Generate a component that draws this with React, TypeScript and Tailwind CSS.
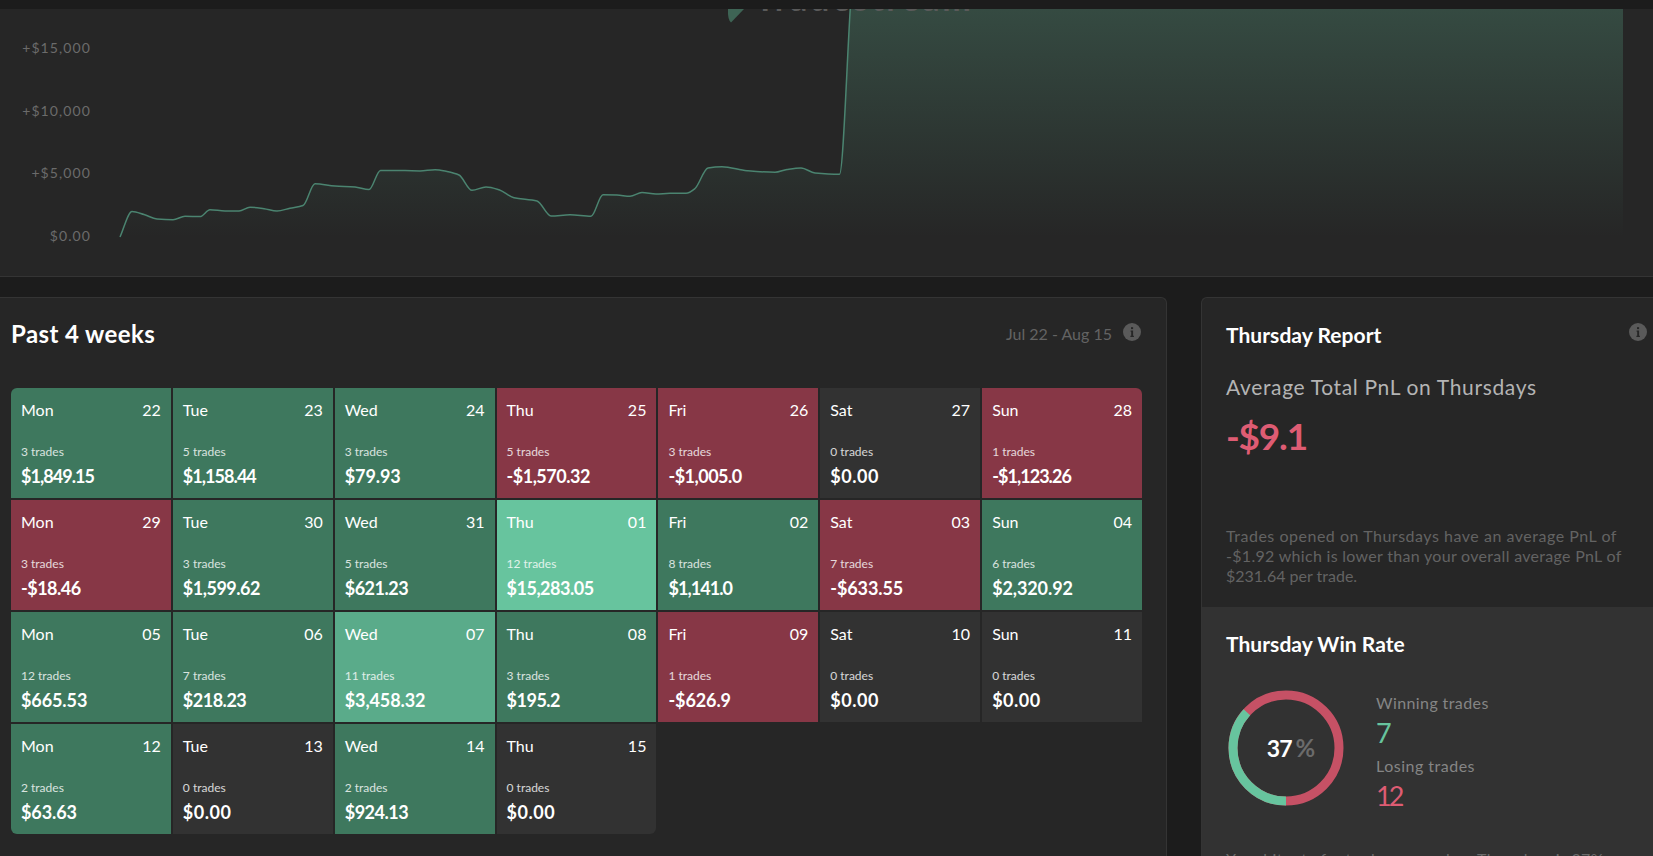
import React from 'react';

type Tone = 'win' | 'loss' | 'flat' | 'good' | 'best';

interface Day {
  name: string;
  date: string;
  trades: number;
  pnl: string;
  tone: Tone;
}

const TONES: Record<Tone, string> = {
  win: 'bg-[#3e785e]',
  loss: 'bg-[#873746]',
  flat: 'bg-[#323232]',
  good: 'bg-[#5aab8a]',
  best: 'bg-[#67c49e]',
};

const NAMES = ['Mon', 'Tue', 'Wed', 'Thu', 'Fri', 'Sat', 'Sun'];

const ROWS: [string, number, string, Tone][] = [
  ['22', 3, '$1,849.15', 'win'],
  ['23', 5, '$1,158.44', 'win'],
  ['24', 3, '$79.93', 'win'],
  ['25', 5, '-$1,570.32', 'loss'],
  ['26', 3, '-$1,005.0', 'loss'],
  ['27', 0, '$0.00', 'flat'],
  ['28', 1, '-$1,123.26', 'loss'],
  ['29', 3, '-$18.46', 'loss'],
  ['30', 3, '$1,599.62', 'win'],
  ['31', 5, '$621.23', 'win'],
  ['01', 12, '$15,283.05', 'best'],
  ['02', 8, '$1,141.0', 'win'],
  ['03', 7, '-$633.55', 'loss'],
  ['04', 6, '$2,320.92', 'win'],
  ['05', 12, '$665.53', 'win'],
  ['06', 7, '$218.23', 'win'],
  ['07', 11, '$3,458.32', 'good'],
  ['08', 3, '$195.2', 'win'],
  ['09', 1, '-$626.9', 'loss'],
  ['10', 0, '$0.00', 'flat'],
  ['11', 0, '$0.00', 'flat'],
  ['12', 2, '$63.63', 'win'],
  ['13', 0, '$0.00', 'flat'],
  ['14', 2, '$924.13', 'win'],
  ['15', 0, '$0.00', 'flat'],
];

const DAYS: Day[] = ROWS.map(([date, trades, pnl, tone], i) => ({ name: NAMES[i % 7], date, trades, pnl, tone }));

const POINTS: [number, number][] = [
  [120, 237], [132, 211.5], [144, 214.5], [157, 219], [173, 219.7], [185, 216.3], [200, 216.6], [210, 209.7],
  [225, 211], [239, 211], [250, 207.2], [264, 208.7], [277, 211], [290, 208.2], [303, 205.5], [315, 183.7],
  [335, 186], [355, 187], [369, 189.6], [380.5, 170.5], [405, 170.6], [420, 170.9], [435, 169.7], [447, 171.5],
  [459, 175], [472, 190.3], [486, 187], [499, 189.7], [514, 197.7], [537, 201], [551, 216], [570, 214.8],
  [591, 216.3], [603, 194.8], [617, 195], [630, 196.3], [642, 192.5], [656, 194], [670, 193.3], [686, 193.3],
  [695, 188.5], [708, 168], [722, 166.7], [747, 170.7], [775, 172.3], [787, 169.5], [801, 168], [815, 173],
  [839.5, 174.3], [850.5, 5],
];

// Monotone cubic interpolation, so the curve never overshoots a point.
function linePath(pts: [number, number][]) {
  const n = pts.length;
  const slope = pts.slice(1).map((p, i) => (p[1] - pts[i][1]) / (p[0] - pts[i][0]));
  const m = pts.map((_, i) => {
    if (i === 0) return slope[0];
    if (i === n - 1) return slope[n - 2];
    const a = slope[i - 1];
    const b = slope[i];
    return a * b <= 0 ? 0 : (2 * a * b) / (a + b);
  });
  let d = `M${pts[0][0]},${pts[0][1]}`;
  for (let i = 1; i < n; i++) {
    const [x0, y0] = pts[i - 1];
    const [x1, y1] = pts[i];
    const h = (x1 - x0) / 3;
    d += `C${x0 + h},${y0 + m[i - 1] * h} ${x1 - h},${y1 - m[i] * h} ${x1},${y1}`;
  }
  return d;
}

const InfoIcon: React.FC = () => (
  <svg width="18" height="18" viewBox="0 0 18 18" className="shrink-0">
    <circle cx="9" cy="9" r="9" fill="#5a5a5a" />
    <rect x="8" y="4.2" width="2.1" height="1.9" fill="#262626" />
    <path d="M7.6 7.6h2.500v5.100h0.800v1.200h-3.500v-1.200h0.800v-3.900h-0.600z" fill="#262626" />
  </svg>
);

const PnlChart: React.FC = () => {
  const line = linePath(POINTS);
  return (
    <section className="relative h-[268px] overflow-hidden border-b border-[#343434] bg-[#262626]">
      <svg width="1653" height="267" viewBox="0 9 1653 267" className="absolute left-0 top-0">
        <defs>
          <linearGradient id="pnl" gradientUnits="userSpaceOnUse" x1="0" y1="9" x2="0" y2="237">
            <stop offset="0" stopColor="#67c49e" stopOpacity="0.23" />
            <stop offset="1" stopColor="#67c49e" stopOpacity="0" />
          </linearGradient>
        </defs>
        <path d="M728 9h16L731 22.5Q727.5 19.5 728 9Z" fill="#3e6455" />
        <path d={`${line}H1623V237H120Z`} fill="url(#pnl)" />
        <path d={line} fill="none" stroke="#4b8470" strokeWidth="1.5" />
      </svg>
      <div className="absolute left-[755px] top-[-27px] text-[34px] leading-[31px] tracking-[2.8px] font-bold text-[#5a5a5a]">
        Tradestream
      </div>
      <div className="flex w-[91px] flex-col gap-[42.7px] pt-[29px] text-right text-[14px] leading-5 tracking-[1.1px] text-[#6b6b6b]">
        <span>+$15,000</span>
        <span>+$10,000</span>
        <span>+$5,000</span>
        <span>$0.00</span>
      </div>
    </section>
  );
};

const amountTracking = (pnl: string) => {
  const ones = pnl.split('1').length - 1;
  if (pnl === '$0.00') return 'tracking-[0.5px]';
  if (ones === 0) return 'tracking-[-0.1px]';
  return ones === 1 ? 'tracking-[-0.5px]' : 'tracking-[-0.95px]';
};

const DayCell: React.FC<{ day: Day; corner: string }> = ({ day, corner }) => (
  <div className={`h-[110px] px-[10px] pt-3 text-white ${TONES[day.tone]} ${corner}`}>
    <div className="flex justify-between text-base leading-5">
      <span>{day.name}</span>
      <span>{day.date}</span>
    </div>
    <div className="mt-6 text-xs leading-4 opacity-80">{day.trades} trades</div>
    <div className={`mt-1 text-lg leading-6 font-bold ${amountTracking(day.pnl)}`}>{day.pnl}</div>
  </div>
);

const CORNERS: Record<number, string> = {
  0: 'rounded-tl-md',
  6: 'rounded-tr-md',
  21: 'rounded-bl-md',
  24: 'rounded-br-md',
};

const Calendar: React.FC = () => (
  <section className="w-[1167px] shrink-0 rounded-tr-md border-t border-r border-[#343434] bg-[#262626] pl-[11px] pr-6">
    <header className="flex h-[90px] justify-between pt-5">
      <h2 className="pt-px text-2xl leading-[30px] tracking-[0.4px] font-bold text-white">Past 4 weeks</h2>
      <div className="mr-px flex gap-[11px] pt-[5px]">
        <span className="-mt-px text-base leading-6 text-[#636363]">Jul 22 - Aug 15</span>
        <InfoIcon />
      </div>
    </header>
    <div className="grid grid-cols-7 gap-0.5">
      {DAYS.map((day, i) => (
        <DayCell key={i} day={day} corner={CORNERS[i] ?? ''} />
      ))}
    </div>
  </section>
);

const Donut: React.FC = () => (
  <div className="relative flex h-[116px] w-[116px] items-center justify-center">
    <svg width="116" height="116" viewBox="0 0 116 116" className="absolute inset-0">
      <circle cx="58" cy="58" r="53" fill="none" stroke="#c65165" strokeWidth="9" />
      <circle
        cx="58"
        cy="58"
        r="53"
        fill="none"
        stroke="#67c49e"
        strokeWidth="9"
        pathLength="100"
        strokeDasharray="36.8 100"
        transform="rotate(90 58 58)"
      />
    </svg>
    <span className="relative ml-[9px] text-[23px] leading-7 font-bold tracking-[-1px] text-white">
      37<span className="ml-1 text-2xl leading-7 text-[#6b6b6b]">%</span>
    </span>
  </div>
);

const Report: React.FC = () => (
  <section className="w-[480px] shrink-0 rounded-tl-md border-t border-l border-[#343434] bg-[#262626]">
    <div className="h-[309px] pl-6 pt-[23px]">
      <div className="flex justify-between">
        <h3 className="text-[21px] leading-7 tracking-[0.05px] font-bold text-white">Thursday Report</h3>
        <div className="mr-[34px] pt-0.5">
          <InfoIcon />
        </div>
      </div>
      <p className="mt-6 text-[21px] leading-7 tracking-[0.65px] text-[#b4b4b4]">Average Total PnL on Thursdays</p>
      <p className="mt-[13px] text-[37px] leading-[44px] tracking-[-1.2px] font-bold text-[#de5c73]">-$9.1</p>
      <p className="mt-[68px] text-base leading-5 text-[#636363]">
        <span className="tracking-[0.52px]">Trades opened on Thursdays have an average PnL of</span>
        <br />
        <span className="tracking-[0.3px]">-$1.92 which is lower than your overall average PnL of</span>
        <br />
        $231.64 per trade.
      </p>
    </div>
    <div className="h-[249px] bg-[#323232] pl-6 pt-[23px]">
      <h3 className="text-[21px] leading-7 tracking-[0.05px] font-bold text-white">Thursday Win Rate</h3>
      <div className="mt-8 flex h-[116px] gap-8 pl-[2px]">
        <Donut />
        <div>
          <p className="pt-[3px] text-base leading-5 tracking-[0.4px] text-[#858585]">Winning trades</p>
          <p className="mt-[5px] text-[27px] leading-[30px] text-[#67c49e]">7</p>
          <p className="mt-2 text-base leading-5 tracking-[0.5px] text-[#858585]">Losing trades</p>
          <p className="mt-[5px] text-[27px] leading-[30px] tracking-[-3px] text-[#de5c73]">12</p>
        </div>
      </div>
      <p className="mt-[43px] text-base leading-5 tracking-[0.3px] whitespace-nowrap text-[#6b6b6b]">
        Your hit rate for trades opened on Thursdays is 37%
      </p>
    </div>
  </section>
);

export default function App() {
  return (
    <div className="h-[856px] w-[1653px] overflow-hidden bg-[#1c1c1c] pt-[9px] font-['Lato',sans-serif]">
      <PnlChart />
      <div className="mt-5 flex h-[600px] gap-[34px]">
        <Calendar />
        <Report />
      </div>
    </div>
  );
}
